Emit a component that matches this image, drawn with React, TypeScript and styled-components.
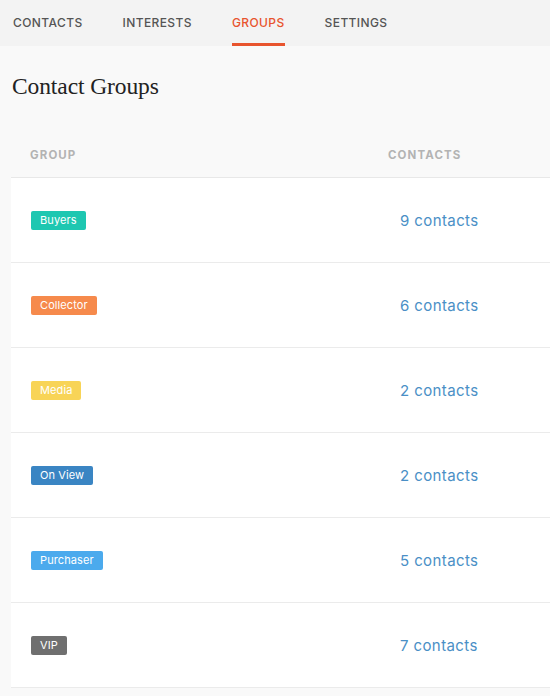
import React from "react";
import styled, { createGlobalStyle } from "styled-components";

const Global = createGlobalStyle`
  html, body { margin: 0; padding: 0; background: #f9f9f9; }
  body { font-family: Inter, "Liberation Sans", sans-serif; }
`;

const Page = styled.div`
  width: 550px;
  height: 696px;
  overflow: hidden;
  background: #f9f9f9;
`;

const TabBar = styled.nav`
  display: flex;
  gap: 40px;
  height: 46px;
  padding-left: 13px;
  background: #f3f3f3;
`;

const Tab = styled.div<{ $active?: boolean }>`
  display: flex;
  align-items: center;
  height: 46px;
  box-sizing: border-box;
  padding-top: 1px;
  font-family: Inter, "Liberation Sans", sans-serif;
  font-size: 12px;
  font-weight: 500;
  letter-spacing: 0.4px;
  color: ${(p) => (p.$active ? "#e8542e" : "#555555")};
  border-bottom: 3px solid ${(p) => (p.$active ? "#e8542e" : "transparent")};
`;

const Title = styled.h1`
  margin: 0;
  padding: 27px 0 0 12px;
  height: 57px;
  box-sizing: border-box;
  font-family: "Liberation Serif", serif;
  font-weight: 400;
  font-size: 23.5px;
  letter-spacing: -0.1px;
  color: #222;
`;

const Table = styled.div`
  margin: 27px 0 0 11px;
`;

const HeadRow = styled.div`
  display: grid;
  grid-template-columns: 377px 1fr;
  height: 47px;
  align-items: center;
  border-bottom: 1px solid #e8e8e8;
`;

const HeadCell = styled.div`
  padding-left: 19px;
  font-size: 11.5px;
  font-weight: 700;
  letter-spacing: 1.1px;
  color: #b3b3b3;
  padding-top: 3px;
  &:last-child { padding-left: 0; }
`;

const Row = styled.div`
  display: grid;
  grid-template-columns: 389px 1fr;
  height: 84px;
  align-items: center;
  background: #ffffff;
  border-bottom: 1px solid #ebebeb;
`;

const BadgeCell = styled.div`
  padding-left: 20px;
  display: flex;
`;

const Badge = styled.span<{ $bg: string }>`
  display: inline-flex;
  align-items: center;
  height: 19px;
  padding: 0 9px;
  border-radius: 2px;
  background: ${(p) => p.$bg};
  color: #ffffff;
  font-size: 11px;
  letter-spacing: 0.1px;
`;

const Count = styled.a`
  font-size: 15px;
  color: #4a8fc6;
  text-decoration: none;
  letter-spacing: 0.4px;
`;

const groups = [
  { name: "Buyers", color: "#1ec7b1", count: 9 },
  { name: "Collector", color: "#f68a4c", count: 6 },
  { name: "Media", color: "#f8d457", count: 2 },
  { name: "On View", color: "#3a85c3", count: 2 },
  { name: "Purchaser", color: "#4baaed", count: 5 },
  { name: "VIP", color: "#6f6f6f", count: 7 },
];

export default function App() {
  return (
    <Page>
      <Global />
      <TabBar>
        <Tab>CONTACTS</Tab>
        <Tab>INTERESTS</Tab>
        <Tab $active>GROUPS</Tab>
        <Tab>SETTINGS</Tab>
      </TabBar>
      <Title>Contact Groups</Title>
      <Table>
        <HeadRow>
          <HeadCell>GROUP</HeadCell>
          <HeadCell>CONTACTS</HeadCell>
        </HeadRow>
        {groups.map((g) => (
          <Row key={g.name}>
            <BadgeCell>
              <Badge $bg={g.color}>{g.name}</Badge>
            </BadgeCell>
            <Count href="#">{g.count} contacts</Count>
          </Row>
        ))}
      </Table>
    </Page>
  );
}
